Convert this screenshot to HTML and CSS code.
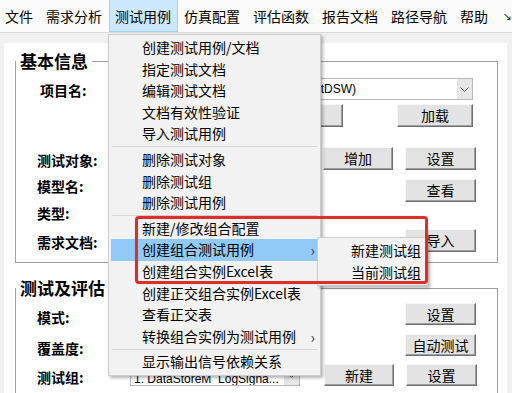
FILE: index.html
```html
<html>
<head>
  <meta charset="utf-8">
  <link rel="stylesheet" href="styles.css">
</head>
<body>
  <div class="menubar">
    <div class="item first">文件</div>
    <div class="item">需求分析</div>
    <div class="item active">测试用例</div>
    <div class="item">仿真配置</div>
    <div class="item">评估函数</div>
    <div class="item">报告文档</div>
    <div class="item">路径导航</div>
    <div class="item">帮助</div>
    <div class="more">↘</div>
  </div>

  <div class="client">
    <div class="panel">
      <!-- 基本信息 -->
      <fieldset class="group">
        <legend>基本信息</legend>
        <div class="group-body">
          <div class="labels">
            <div class="label l-project">项目名:</div>
            <div class="label l-object">测试对象:</div>
            <div class="label l-model">模型名:</div>
            <div class="label l-type">类型:</div>
            <div class="label l-doc">需求文档:</div>
          </div>
          <div class="controls">
            <div class="combo combo-project">
              <span class="combo-text">(TestDSW)</span>
              <span class="combo-arrow"><svg width="9" height="5" viewBox="0 0 9 5"><polyline points="0.5,0.5 4.5,4.5 8.5,0.5" fill="none" stroke="#606060" stroke-width="1"/></svg></span>
            </div>
            <div class="row r-load">
              <div class="btn b-browse">浏览</div>
              <div class="btn b-load">加载</div>
            </div>
            <div class="row r-object">
              <div class="btn b-add">增加</div>
              <div class="btn b-right">设置</div>
            </div>
            <div class="row r-model">
              <div class="btn b-solo">查看</div>
            </div>
            <div class="row r-doc">
              <div class="btn b-solo">导入</div>
            </div>
          </div>
        </div>
      </fieldset>

      <!-- 测试及评估 -->
      <fieldset class="group group-eval">
        <legend>测试及评估</legend>
        <div class="group-body">
          <div class="labels">
            <div class="label l-mode">模式:</div>
            <div class="label l-cover">覆盖度:</div>
            <div class="label l-group">测试组:</div>
          </div>
          <div class="controls">
            <div class="row r-mode">
              <div class="btn b-solo">设置</div>
            </div>
            <div class="row r-auto">
              <div class="btn b-solo">自动测试</div>
            </div>
            <div class="row r-group">
              <div class="combo combo-group">
                <span class="combo-text">1. DataStoreM_LogSigna...</span>
                <span class="combo-arrow"><svg width="9" height="5" viewBox="0 0 9 5"><polyline points="0.5,0.5 4.5,4.5 8.5,0.5" fill="none" stroke="#606060" stroke-width="1"/></svg></span>
              </div>
              <div class="btn b-new">新建</div>
              <div class="btn b-right">设置</div>
            </div>
          </div>
        </div>
      </fieldset>
    </div>
  </div>

  <!-- 测试用例 dropdown -->
  <div class="dropdown">
    <div class="mi">创建测试用例/文档</div>
    <div class="mi">指定测试文档</div>
    <div class="mi">编辑测试文档</div>
    <div class="mi">文档有效性验证</div>
    <div class="mi">导入测试用例</div>
    <div class="sep"></div>
    <div class="mi">删除测试对象</div>
    <div class="mi">删除测试组</div>
    <div class="mi">删除测试用例</div>
    <div class="sep"></div>
    <div class="mi">新建/修改组合配置</div>
    <div class="mi hot"><span>创建组合测试用例</span><span class="sub-arrow">›</span></div>
    <div class="mi">创建组合实例Excel表</div>
    <div class="mi">创建正交组合实例Excel表</div>
    <div class="mi">查看正交表</div>
    <div class="mi"><span>转换组合实例为测试用例</span><span class="sub-arrow">›</span></div>
    <div class="sep"></div>
    <div class="mi">显示输出信号依赖关系</div>
  </div>

  <div class="submenu">
    <div class="mi">新建测试组</div>
    <div class="mi">当前测试组</div>
  </div>

  <div class="callout"></div>
</body>
</html>
```

FILE: styles.css
```css
body {
  margin: 0;
  width: 512px;
  height: 393px;
  overflow: hidden;
  position: relative;
  background: #f0f0f0;
  font-family: "Noto Sans CJK SC", sans-serif;
  font-size: 14px;
  color: #000;
}

/* menu bar */
.menubar {
  display: flex;
  height: 32px;
  background: #fbfbfb;
  border-bottom: 1px solid #dadada;
}

.menubar .item {
  padding: 1px 5.5px 0 5.5px;
  height: 30px;
  line-height: 30px;
  border: 1px solid transparent;
  border-top-width: 0;
}

.menubar .item.first {
  margin-left: -1.5px;
}

.menubar .item.active {
  background: #cce8ff;
  border-color: #99d1ff;
}

.menubar .more {
  margin-left: 8px;
  line-height: 34px;
  font-size: 11px;
  font-family: "DejaVu Sans", sans-serif;
  color: #333;
}

/* client area */
.client {
  padding: 10px 5px 0 4px;
}

.panel {
  background: #fff;
  height: 360px;
  padding: 8px 9px 0 11px;
}

.group {
  margin: 0;
  padding: 0 0 10px 0;
  border: 1px solid #a0a0a0;
  min-width: 0;
}

.group-eval {
  margin-top: 15px;
}

.group legend {
  margin-left: 0;
  padding: 0 4px;
  font-size: 17px;
  font-weight: bold;
  line-height: 20px;
}

.group-body {
  display: flex;
}

.labels {
  width: 93px;
  padding-left: 21px;
  display: flex;
  flex-direction: column;
}

.label {
  font-weight: bold;
  height: 20px;
  line-height: 20px;
  white-space: nowrap;
}

.l-project { margin-top: 9px; margin-left: 3px; }
.l-object { margin-top: 50px; }
.l-model { margin-top: 6px; }
.l-type { margin-top: 7px; }
.l-doc { margin-top: 9px; }

.l-mode { margin-top: 9px; }
.l-cover { margin-top: 11px; }
.l-group { margin-top: 9px; }

.controls {
  display: flex;
  flex-direction: column;
}

.row {
  display: flex;
  height: 23px;
}

/* buttons */
.btn {
  box-sizing: border-box;
  height: 100%;
  background: #e3e3e3;
  border: 1px solid;
  border-color: #f8f8f8 #6f6f6f #6f6f6f #f8f8f8;
  box-shadow: inset -1px -1px 0 #a0a0a0;
  text-align: center;
  line-height: 20px;
  white-space: nowrap;
}

.b-browse { margin-left: 123px; width: 90px; }
.b-load { margin-left: 54px; width: 76px; }
.b-add { margin-left: 193px; width: 70px; }
.b-right { margin-left: 12px; width: 71px; }
.b-solo { margin-left: 275px; width: 71px; }
.b-new { margin-left: 24px; width: 70px; }

.r-load { margin-top: 4px; }
.r-object { margin-top: 20px; }
.r-model { margin-top: 9px; }
.r-doc { margin-top: 27px; }

.r-mode { margin-top: 5px; height: 22px; }
.r-auto { margin-top: 9px; height: 22px; }
.r-group { margin-top: 8px; height: 22px; }

/* combo boxes */
.combo {
  box-sizing: border-box;
  display: flex;
  border: 1px solid #b9b9b9;
  background: #fff;
  font-family: "Liberation Sans", sans-serif;
  font-size: 12px;
}

.combo-text {
  flex: 1;
  align-self: center;
  white-space: nowrap;
  overflow: hidden;
}

.combo-arrow {
  width: 15px;
  background: #e6e6e6;
  display: flex;
  align-items: center;
  justify-content: center;
}

.combo-project {
  margin-top: 7px;
  margin-left: 162px;
  width: 181px;
  height: 22px;
}

.combo-project .combo-text {
  padding-left: 5px;
}

.combo-group {
  width: 170px;
  height: 100%;
}

.combo-group .combo-text {
  align-self: flex-end;
  padding: 0 0 0 3px;
  line-height: 12px;
}

/* dropdown menus */
.dropdown,
.submenu {
  position: absolute;
  box-sizing: border-box;
  background: #f2f2f2;
  border: 1px solid #cccccc;
  box-shadow: 2px 2px 3px rgba(0, 0, 0, 0.3);
  padding: 2px;
}

.dropdown {
  left: 108px;
  top: 34px;
  width: 213px;
}

.submenu {
  left: 317px;
  top: 237px;
  width: 111px;
}

.mi {
  display: flex;
  justify-content: space-between;
  height: 21.6px;
  line-height: 21.6px;
  padding-left: 31px;
  white-space: nowrap;
}

.mi.hot {
  background: #91c9f7;
}

.sub-arrow {
  margin-right: 3px;
  font-size: 15px;
  color: #333;
}

.sep {
  height: 1px;
  margin: 1.5px 1px;
  background: #d7d7d7;
}

/* red annotation */
.callout {
  position: absolute;
  left: 135px;
  top: 216px;
  width: 293px;
  height: 68px;
  box-sizing: border-box;
  border: 3px solid #dc2f2a;
  border-radius: 4px;
  box-shadow: 0 0 1px rgba(200, 0, 0, 0.4);
}
```
